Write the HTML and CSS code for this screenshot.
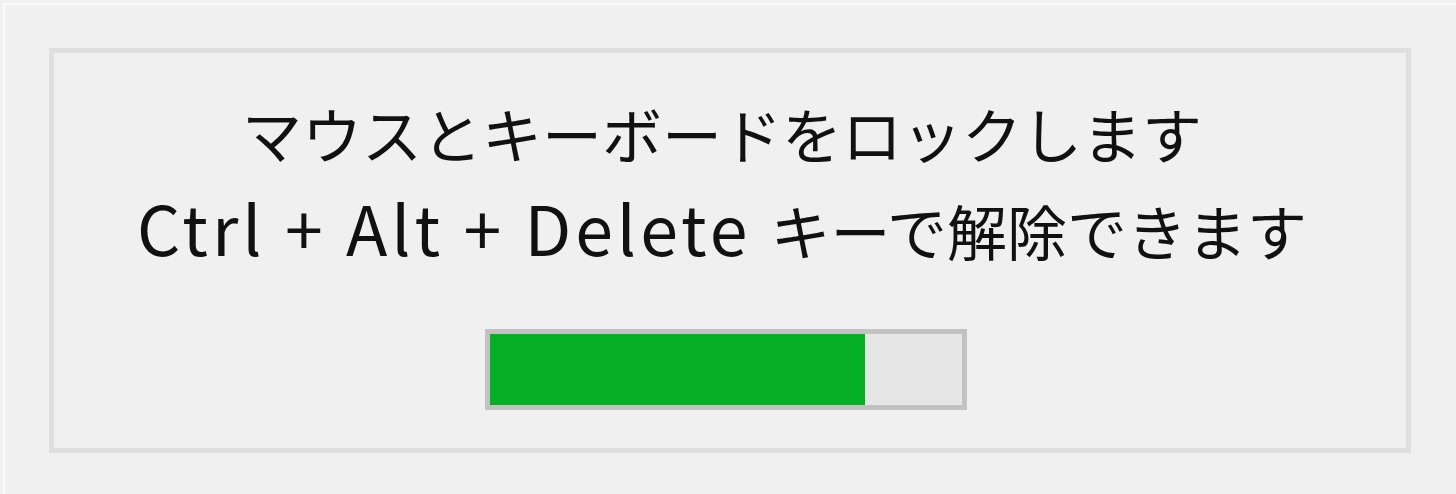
FILE: index.html
```html
<!DOCTYPE html>
<html lang="ja">
<head>
<meta charset="utf-8">
<link rel="stylesheet" href="styles.css">
</head>
<body>
<div class="frame">
  <div class="group">
    <div class="line">マウスとキーボードをロックします</div>
    <div class="line line2"><span class="keys">Ctrl + Alt + Delete </span>キーで解除できます</div>
    <div class="progress"><div class="fill" style="width:79.5%"></div></div>
  </div>
</div>
</body>
</html>
```
FILE: styles.css
```css
html, body {
  margin: 0;
  padding: 0;
  background: #f0f0f0;
  width: 1456px;
  height: 494px;
  overflow: hidden;
}
.frame {
  position: relative;
  box-sizing: border-box;
  width: 1456px;
  height: 494px;
  padding: 45px 0 0 49px;
  border-top: 3px solid #f0f0f0;
}
.frame::before {
  content: "";
  position: absolute;
  left: 3px;
  top: 0;
  right: 0;
  bottom: 0;
  border-top: 2px solid #f9f9f9;
  border-left: 2px solid #f9f9f9;
}
.group {
  box-sizing: border-box;
  width: 1362px;
  height: 405px;
  border: 5px solid #dfdfdf;
  display: flex;
  flex-direction: column;
  align-items: center;
  padding-top: 29px;
  padding-right: 16px;
  font-family: "Noto Sans CJK JP", "Noto Sans", sans-serif;
  font-size: 60px;
  color: #111;
}
.line {
  line-height: 102px;
  white-space: nowrap;
}
.line2 {
  line-height: 98px;
  margin-top: -6px;
}
.keys {
  font-size: 68px;
  letter-spacing: 4px;
}
.progress {
  margin-top: 50px;
  margin-left: 8px;
  box-sizing: border-box;
  width: 482px;
  height: 81px;
  border: 5px solid #c2c2c2;
  background: #e6e6e6;
  display: flex;
}
.fill {
  height: 100%;
  background: #06b025;
}
```
